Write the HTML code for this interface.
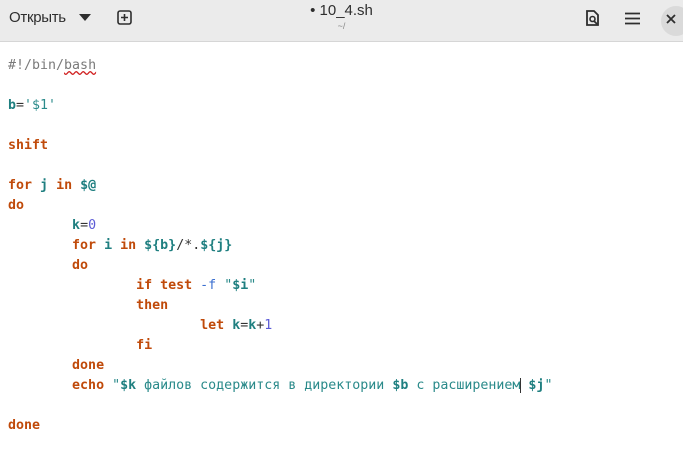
<!DOCTYPE html>
<html><head><meta charset="utf-8"><style>
body{margin:0;width:683px;height:465px;background:#fff;overflow:hidden;font-family:"Liberation Sans","DejaVu Sans",sans-serif}
.hd{position:absolute;left:0;top:0;width:683px;height:41px;background:#ebebeb;border-bottom:1px solid #d6d6d6}
.code{position:absolute;left:8px;top:56px;font-family:"DejaVu Sans Mono",monospace;font-size:13.3px;line-height:20px;white-space:pre;color:#2e8b8b;tab-size:8}
.k{color:#c04a0a;font-weight:bold}.v{color:#1f7f80;font-weight:bold}.c{color:#7a7a7a}.s{color:#2a8a8a}.o{color:#3b6fd0}.n{color:#5b5bd6}.p{color:#333}
</style></head><body>
<div class="hd">
<div style="position:absolute;left:9px;top:9px;font-size:15px;color:#2e2e2e;letter-spacing:-0.3px">Открыть</div>
<svg style="position:absolute;left:79px;top:14px" width="12" height="8"><path d="M0 0H12L6 7Z" fill="#2e2e2e"/></svg>
<svg style="position:absolute;left:117px;top:10px" width="16" height="16"><rect x="1" y="1" width="13" height="13" rx="2" fill="none" stroke="#2e2e2e" stroke-width="1.6"/><path d="M7.5 4v7M4 7.5h7" stroke="#2e2e2e" stroke-width="1.6"/></svg>
<div style="position:absolute;left:0;width:683px;top:2px;text-align:center;font-size:15px;color:#2e2e2e">• 10_4.sh</div>
<div style="position:absolute;left:0;width:683px;top:21px;text-align:center;font-size:9px;color:#888">~/</div>
<svg style="position:absolute;left:585px;top:10px" width="16" height="17"><path d="M2 1h7l4 4v10H2z" fill="none" stroke="#2e2e2e" stroke-width="1.8"/><circle cx="7.5" cy="9" r="2.5" fill="none" stroke="#2e2e2e" stroke-width="1.6"/><path d="M9 11l3 3" stroke="#2e2e2e" stroke-width="1.8"/></svg>
<svg style="position:absolute;left:625px;top:12px" width="15" height="13"><path d="M0 1.5h15M0 6.5h15M0 11.5h15" stroke="#2e2e2e" stroke-width="1.8"/></svg>
<div style="position:absolute;left:661px;top:6px;width:30px;height:30px;border-radius:50%;background:#dadada"></div>
<svg style="position:absolute;left:666px;top:14px" width="10" height="10"><path d="M1 1l8 8M9 1l-8 8" stroke="#2e2e2e" stroke-width="1.8"/></svg>
</div>
<div class="code"><span class="c">#!/bin/<span style="text-decoration:underline wavy #d02020">bash</span></span>

<span class="v">b</span><span class="p">=</span><span class="s">'$1'</span>

<span class="k">shift</span>

<span class="k">for</span> <span class="v">j</span> <span class="k">in</span> <span class="v">$@</span>
<span class="k">do</span>
	<span class="v">k</span><span class="p">=</span><span class="n">0</span>
	<span class="k">for</span> <span class="v">i</span> <span class="k">in</span> <span class="v">${b}</span><span class="p">/*.</span><span class="v">${j}</span>
	<span class="k">do</span>
		<span class="k">if</span> <span class="k">test</span> <span class="o">-f</span> <span class="s">"<b class="v">$i</b>"</span>
		<span class="k">then</span>
			<span class="k">let</span> <span class="v">k</span><span class="p">=</span><span class="v">k</span><span class="p">+</span><span class="n">1</span>
		<span class="k">fi</span>
	<span class="k">done</span>
	<span class="k">echo</span> <span class="s">"<b class="v">$k</b> файлов содержится в директории <b class="v">$b</b> с расширением<span style="border-left:1px solid #333;margin-right:-1px"></span> <b class="v">$j</b>"</span>

<span class="k">done</span></div>
</body></html>
